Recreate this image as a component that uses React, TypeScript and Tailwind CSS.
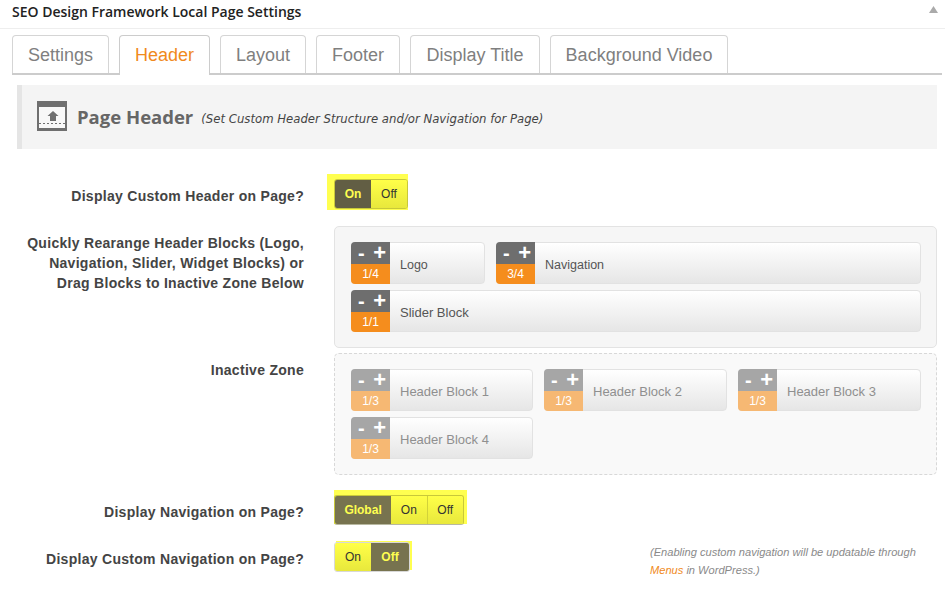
const arial = "font-['Liberation_Sans',Arial,sans-serif]";

const tabs = [
  { name: "Settings", w: "w-[97px]" },
  { name: "Header", w: "w-[91px]", active: true },
  { name: "Layout", w: "w-[86px]" },
  { name: "Footer", w: "w-[84px]" },
  { name: "Display Title", w: "w-[130px]" },
  { name: "Background Video", w: "w-[178px]" },
];

function Block({ name, size, width, dim, small }: { name: string; size: string; width: string; dim?: boolean; small?: boolean }) {
  return (
    <div className={`${width} h-[42px] flex rounded-[4px] border border-[#e2e2e2] bg-gradient-to-b from-white to-[#e6e6e6]`}>
      <div className="w-[39px] -ml-px -my-px h-[42px] flex flex-col shrink-0">
        <div className={`h-[22px] flex items-center justify-between pl-[7px] pr-[4px] text-white font-bold rounded-tl-[4px] ${dim ? "bg-[#a6a6a6]" : "bg-[#6e6e6e]"}`}>
          <span className="text-[20px] leading-[22px]">-</span>
          <span className="text-[22px] leading-[22px]">+</span>
        </div>
        <div className={`h-[20px] flex items-center justify-center text-white text-[12px] leading-none rounded-bl-[4px] ${dim ? "bg-[#f6b873]" : "bg-[#f58d1d]"}`}>
          {size}
        </div>
      </div>
      <div className={`pl-[10px] pt-[4px] flex items-center ${small ? "text-[12.5px]" : "text-[13px]"} ${dim ? "text-[#8f8f8f]" : "text-[#555]"}`}>
        {name}
      </div>
    </div>
  );
}

function Seg({ label, on, w, border, dark }: { label: string; on?: boolean; w: string; border?: boolean; dark?: boolean }) {
  return (
    <div
      className={`${w} h-full flex items-center justify-center text-[12px] ${
        on
          ? `${dark ? "bg-[#625e44]" : "bg-[#77734f]"} text-[#ffff50] font-bold`
          : "bg-gradient-to-b from-[#ffff48] to-[#e8e83c] text-[#333]"
      } ${border ? "border-l border-[#d2d23a]" : ""}`}
    >
      {label}
    </div>
  );
}

function Label({ children, className = "" }: { children: React.ReactNode; className?: string }) {
  return (
    <div className={`w-[304px] shrink-0 text-right text-[14px] font-bold text-[#444] tracking-[0.29px] leading-[20px] ${className}`}>
      {children}
    </div>
  );
}

export default function App() {
  return (
    <div className={`w-[945px] h-[612px] overflow-hidden bg-white flex flex-col ${arial}`}>
      <div className="h-[29px] shrink-0 border-b border-[#eeeeee] flex items-center justify-between pl-[12px] pr-[5px]">
        <span className="font-['Open_Sans',sans-serif] font-semibold text-[14px] text-[#222] -mt-[6px]">
          SEO Design Framework Local Page Settings
        </span>
        <svg width="9" height="7" viewBox="0 0 9 7" className="-mt-[9px] mr-[2px]">
          <path d="M4.5 0 L9 7 L0 7 Z" fill="#aaaaaa" />
        </svg>
      </div>

      <div className="mt-[6px] ml-[12px] mr-[3px] h-[40px] shrink-0 flex items-start gap-[10px] border-b-2 border-[#cccccc]">
        {tabs.map((t) => (
          <div
            key={t.name}
            className={`${t.w} flex items-center justify-center text-[18px] rounded-t-[4px] border border-b-0 bg-white ${
              t.active ? "h-[40px] text-[#f08a1d] border-[#cccccc]" : "h-[38px] text-[#7f7f7f] border-[#d5d5d5]"
            }`}
          >
            <span className={t.active ? "" : "mt-[2px]"}>{t.name}</span>
          </div>
        ))}
      </div>

      <div className="mt-[10px] ml-[17px] mr-[8px] h-[64px] shrink-0 flex items-center bg-[#f4f4f4] border-l-[5px] border-[#e5e5e5] pl-[15px]">
        <svg width="30" height="30" viewBox="0 0 30 30" className="shrink-0 -mt-[2px]">
          <rect x="0" y="0" width="30" height="30" fill="#6f6f6f" />
          <rect x="2" y="6" width="26" height="21" fill="#f8f8f8" />
          <path d="M16 10 L21.5 15 L19 15 L19 20 L13 20 L13 15 L10.5 15 Z" fill="#6f6f6f" />
          <path d="M2 22.5 H28" stroke="#6f6f6f" strokeWidth="1" strokeDasharray="2 2" />
        </svg>
        <span className="ml-[10px] font-['Open_Sans',sans-serif] font-bold text-[18.5px] text-[#666]">Page Header</span>
        <span className="ml-[8px] font-['DejaVu_Sans',sans-serif] italic text-[11.7px] text-[#444] mt-[5px]">
          (Set Custom Header Structure and/or Navigation for Page)
        </span>
      </div>

      <div className="mt-[25px] flex items-center h-[36px] shrink-0">
        <Label className="mt-[8px]">Display Custom Header on Page?</Label>
        <div className="ml-[23px] h-[36px] pl-[7px] pt-[5px] pb-[1px] bg-[#ffff50]">
          <div className="w-[74px] h-[30px] flex rounded-[3px] overflow-hidden border border-[#c8c83a]">
            <Seg label="On" on dark w="w-[37px]" />
            <Seg label="Off" w="w-[37px]" />
          </div>
        </div>
      </div>

      <div className="mt-[16px] flex shrink-0">
        <Label className="pt-[7px] leading-[20px]">
          Quickly Rearange Header Blocks (Logo,
          <br />
          Navigation, Slider, Widget Blocks) or
          <br />
          Drag Blocks to Inactive Zone Below
        </Label>
        <div className="ml-[30px] w-[603px] h-[122px] rounded-[5px] border border-[#e3e3e3] bg-[#f6f6f6] pl-[16px] pt-[15px] flex flex-col gap-[6px]">
          <div className="flex gap-[11px]">
            <Block small name="Logo" size="1/4" width="w-[134px]" />
            <Block small name="Navigation" size="3/4" width="w-[425px]" />
          </div>
          <Block name="Slider Block" size="1/1" width="w-[570px]" />
        </div>
      </div>

      <div className="mt-[5px] flex shrink-0">
        <Label className="pt-[7px]">Inactive Zone</Label>
        <div className="ml-[30px] w-[603px] h-[122px] rounded-[5px] border border-dashed border-[#d8d8d8] bg-[#f9f9f9] pl-[16px] pt-[15px] flex flex-col gap-[6px]">
          <div className="flex gap-[11px]">
            <Block dim name="Header Block 1" size="1/3" width="w-[182px]" />
            <Block dim name="Header Block 2" size="1/3" width="w-[183px]" />
            <Block dim name="Header Block 3" size="1/3" width="w-[183px]" />
          </div>
          <Block dim name="Header Block 4" size="1/3" width="w-[182px]" />
        </div>
      </div>

      <div className="mt-[15px] flex items-start h-[35px] shrink-0">
        <Label className="mt-[12px]">Display Navigation on Page?</Label>
        <div className="ml-[30px] h-[34px] w-[133px] pt-[5px] bg-[#ffff50]">
          <div className="w-[130px] h-[30px] flex rounded-[3px] overflow-hidden border border-[#c8c83a] border-b-[#b8b8a0]">
            <Seg label="Global" on w="w-[57px]" />
            <Seg label="On" w="w-[36px]" />
            <Seg label="Off" w="w-[37px]" border />
          </div>
        </div>
      </div>

      <div className="mt-[16px] flex items-start shrink-0">
        <Label className="mt-[8px]">Display Custom Navigation on Page?</Label>
        <div className="ml-[30px] w-[78px] h-[29px] bg-gradient-to-r from-white from-[2px] to-[#ffff50] to-[2px] flex shrink-0">
          <div className="w-[76px] h-[30px] mt-px flex rounded-[3px] overflow-hidden border border-[#d8d8d8]">
            <Seg label="On" w="w-[37px]" />
            <Seg label="Off" on w="w-[39px]" />
          </div>
        </div>
        <div className="ml-[238px] mt-[2px] text-[11.1px] italic leading-[18px] text-[#8a8a8a] whitespace-nowrap">
          (Enabling custom navigation will be updatable through
          <br />
          <span className="text-[#f08a1d]">Menus</span> in WordPress.)
        </div>
      </div>
    </div>
  );
}
